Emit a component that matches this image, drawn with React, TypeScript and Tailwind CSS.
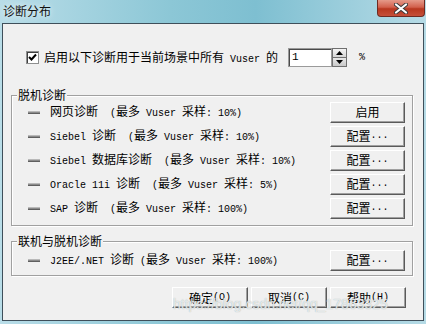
import React from "react";

const ASCII = /^[\x20-\x7e]+$/;

const Mixed = ({ text }: { text: string }) => {
  const parts = text.split(/([\x20-\x7e]+)/).filter(Boolean);
  return (
    <>
      {parts.map((p, i) =>
        ASCII.test(p) ? (
          <span key={i} className="font-['Liberation_Mono'] text-[10px] whitespace-pre">
            {p}
          </span>
        ) : (
          <span key={i}>{p}</span>
        )
      )}
    </>
  );
};

const btnClass =
  "flex items-center justify-center h-[21px] bg-[#f0f0f0] border border-t-white border-l-white border-r-[#5a5a5a] border-b-[#5a5a5a] shadow-[inset_-1px_-1px_0_#a0a0a0] text-[12px] leading-none text-black";

const Button = ({ label, width = "w-[75px]" }: { label: string; width?: string }) => (
  <button className={`${btnClass} ${width}`}>
    <Mixed text={label} />
  </button>
);

const Dash = () => (
  <span className="block w-[12px] h-[3px] bg-[linear-gradient(180deg,#d0d0d0,#8a8a8a_50%,#4a4a4a)]" />
);

interface Row {
  label: string;
  action: string;
}

const offline: Row[] = [
  { label: "网页诊断  (最多 Vuser 采样: 10%)", action: "启用" },
  { label: "Siebel 诊断  (最多 Vuser 采样: 10%)", action: "配置..." },
  { label: "Siebel 数据库诊断  (最多 Vuser 采样: 10%)", action: "配置..." },
  { label: "Oracle 11i 诊断  (最多 Vuser 采样: 5%)", action: "配置..." },
  { label: "SAP 诊断  (最多 Vuser 采样: 100%)", action: "配置..." },
];

const DiagRow = ({ row }: { row: Row }) => (
  <div className="flex items-center h-[24px]">
    <Dash />
    <span className="ml-[10px] text-[12px] leading-none whitespace-pre">
      <Mixed text={row.label} />
    </span>
    <div className="ml-auto">
      <Button label={row.action} />
    </div>
  </div>
);

const Group = ({ title, children, pad }: { title: string; children: React.ReactNode; pad: string }) => (
  <div
    className={`relative ml-[8px] mr-[10px] border border-[#a0a0a0] shadow-[1px_1px_0_#ffffff,inset_1px_1px_0_#ffffff] pl-[16px] pr-[7px] ${pad}`}
  >
    <span className="absolute left-[5px] -top-[8px] bg-[#f0f0f0] px-[1px] text-[12px] leading-[14px]">
      {title}
    </span>
    {children}
  </div>
);

const App = () => {
  return (
    <div className="relative w-[426px] h-[324px] overflow-hidden bg-[linear-gradient(90deg,#b9dde8,#8cc7d6_40%,#7ebfd1_60%,#b6dbe6)] font-['Noto_Sans_CJK_SC',sans-serif] text-black">
      {/* title bar */}
      <div className="flex items-start h-[23px]">
        <span className="pl-[3px] pt-[3px] text-[12px] leading-[16px] text-[#111] [text-shadow:0_0_6px_#ffffff]">
          诊断分布
        </span>
        <div className="ml-auto mr-[1px] w-[48px] h-[17px] rounded-b-[4px] border border-t-0 border-[#6e2a22] bg-[linear-gradient(180deg,#e59a8a,#d2604c_45%,#b8371f_55%,#c5503a)] flex items-center justify-center">
          <svg width="14" height="11" viewBox="0 0 14 11">
            <path d="M2 1.5 L12 9.5 M12 1.5 L2 9.5" stroke="#3a3a3a" strokeWidth="4" strokeLinecap="round" />
            <path d="M2 1.5 L12 9.5 M12 1.5 L2 9.5" stroke="#ffffff" strokeWidth="2.2" strokeLinecap="round" />
          </svg>
        </div>
      </div>

      {/* client area */}
      <div className="mx-[2px] h-[298px] border border-[#3f4f5a] bg-[#f0f0f0] pt-[24px]">
        <div className="flex items-center h-[19px] pl-[23px]">
          <span className="w-[13px] h-[13px] bg-white border border-[#8e8f8f] shadow-[inset_1px_1px_0_#404040] flex items-center justify-center">
            <svg width="9" height="9" viewBox="0 0 9 9">
              <path d="M1 4 L3.5 6.5 L8 1.5" stroke="#000" strokeWidth="2" fill="none" />
            </svg>
          </span>
          <span className="ml-[5px] text-[12px] leading-none whitespace-pre">
            <Mixed text="启用以下诊断用于当前场景中所有 Vuser 的" />
          </span>
          <div className="ml-[10px] flex h-[19px]">
            <div className="w-[44px] h-[19px] bg-white border border-[#9a9a9a] shadow-[inset_1px_1px_0_#4a4a4a] pl-[3px] flex items-center font-['Liberation_Mono'] text-[11px]">
              1
            </div>
            <div className="flex flex-col w-[15px] h-[19px]">
              <span className="h-[10px] flex items-center justify-center bg-[linear-gradient(180deg,#f4f4f4,#d6d6d6)] border border-[#6f6f6f]">
                <svg width="7" height="4" viewBox="0 0 7 4">
                  <path d="M0 4 L3.5 0 L7 4 Z" fill="#000" />
                </svg>
              </span>
              <span className="h-[9px] flex items-center justify-center bg-[linear-gradient(180deg,#e8e8e8,#c8c8c8)] border border-t-0 border-[#6f6f6f]">
                <svg width="7" height="4" viewBox="0 0 7 4">
                  <path d="M0 0 L7 0 L3.5 4 Z" fill="#000" />
                </svg>
              </span>
            </div>
          </div>
          <span className="ml-[12px] font-['Liberation_Mono'] text-[10px]">%</span>
        </div>

        <div className="mt-[28px]">
          <Group title="脱机诊断" pad="pt-[4px] pb-[5px]">
            {offline.map((r) => (
              <DiagRow key={r.label} row={r} />
            ))}
          </Group>
        </div>

        <div className="mt-[15px]">
          <Group title="联机与脱机诊断" pad="pt-[6px] pb-[3px]">
            <DiagRow row={{ label: "J2EE/.NET 诊断 (最多 Vuser 采样: 100%)", action: "配置..." }} />
          </Group>
        </div>

        <div className="mt-[11px] flex justify-end gap-[3px] pr-[17px]">
          <Button label="确定(O)" width="w-[76px]" />
          <Button label="取消(C)" width="w-[76px]" />
          <Button label="帮助(H)" width="w-[76px]" />
        </div>
      </div>

      {/* watermark */}
      <span className="absolute left-[173px] top-[294px] font-['Liberation_Sans'] text-[14px] text-white/70 [text-shadow:0_0_1px_#9aa]">
        https://blog.csdn.net/qq_17863325
      </span>
    </div>
  );
};

export default App;
